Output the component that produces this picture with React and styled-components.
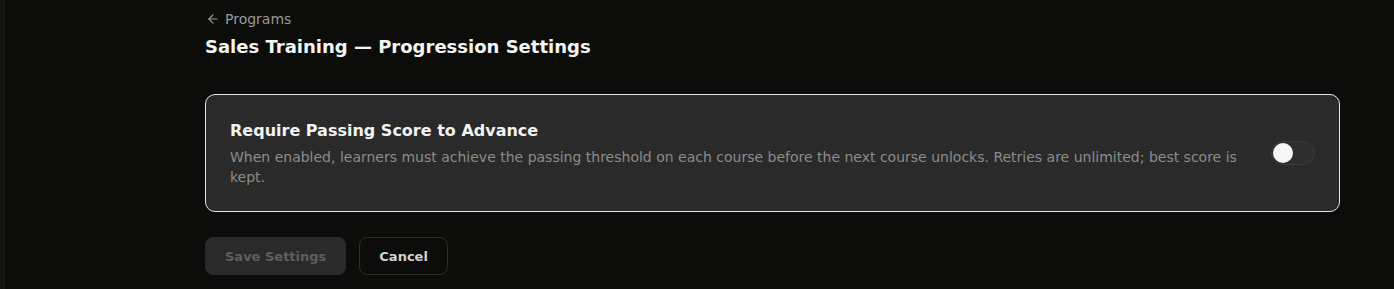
import React, { useState } from "react";
import styled, { createGlobalStyle } from "styled-components";

const Global = createGlobalStyle`
  html, body { margin: 0; padding: 0; background: #0c0c0a; }
  body { font-family: "DejaVu Sans", "Noto Sans", sans-serif; color: #f2f2f2; }
`;

const Shell = styled.div`
  display: flex;
  min-height: 289px;
  background: #0c0c0a;
`;

const Rail = styled.div`
  width: 4px;
  background: #121211;
  border-right: 1px solid #1c1c1b;
  flex-shrink: 0;
`;

const Main = styled.main`
  flex: 1;
  padding: 9px 54px 0 200px;
`;

const BackLink = styled.a`
  display: flex;
  align-items: center;
  gap: 5px;
  height: 20px;
  font-size: 14px;
  line-height: 20px;
  color: #9a9a98;
  text-decoration: none;
  cursor: pointer;
  padding-left: 1px;
`;

const Title = styled.h1`
  margin: 4px 0 33px;
  font-size: 18px;
  line-height: 28px;
  font-weight: 700;
  color: #f4f4f2;
`;

const Card = styled.section`
  display: flex;
  align-items: center;
  gap: 24px;
  padding: 24px;
  background: #2a2a2a;
  border: 1px solid #e6e6e6;
  border-radius: 10px;
`;

const CardText = styled.div`
  flex: 1;
`;

const CardTitle = styled.h2`
  margin: 1px 0 6px;
  font-size: 16px;
  line-height: 22px;
  font-weight: 700;
  color: #f2f2f2;
`;

const CardDesc = styled.p`
  margin: 0;
  font-size: 14px;
  line-height: 19.5px;
  color: #8c8c8a;
`;

const Track = styled.button`
  position: relative;
  width: 44px;
  height: 24px;
  flex-shrink: 0;
  border-radius: 12px;
  border: 1px solid #3a3a3a;
  background: ${(p) => (p.$on ? "#e6e6e6" : "#2e2e2e")};
  padding: 0;
  cursor: pointer;
`;

const Knob = styled.span`
  position: absolute;
  top: 1px;
  left: ${(p) => (p.$on ? "21px" : "1px")};
  width: 20px;
  height: 20px;
  border-radius: 50%;
  background: ${(p) => (p.$on ? "#2a2a2a" : "#f6f6f4")};
`;

const Actions = styled.div`
  display: flex;
  gap: 13px;
  margin-top: 25px;
`;

const Button = styled.button`
  height: 38px;
  padding: 0 19px;
  border-radius: 8px;
  font-family: inherit;
  font-size: 13px;
  font-weight: 700;
  cursor: pointer;
  background: ${(p) => (p.$primary ? "#2a2a2a" : "transparent")};
  color: ${(p) => (p.$primary ? "#5e5e5c" : "#d2d2d0")};
  border: 1px solid ${(p) => (p.$primary ? "#2a2a2a" : "#2e2e2c")};
`;

export default function App() {
  const [on, setOn] = useState(false);
  return (
    <>
      <Global />
      <Shell>
        <Rail />
        <Main>
          <BackLink>
            <svg width="14" height="14" viewBox="0 0 24 24" fill="none" stroke="currentColor" strokeWidth="2" strokeLinecap="round" strokeLinejoin="round">
              <path d="M19 12H5" />
              <path d="M12 19l-7-7 7-7" />
            </svg>
            Programs
          </BackLink>
          <Title>Sales Training — Progression Settings</Title>
          <Card>
            <CardText>
              <CardTitle>Require Passing Score to Advance</CardTitle>
              <CardDesc>
                When enabled, learners must achieve the passing threshold on each course before the next course unlocks. Retries are unlimited; best score is kept.
              </CardDesc>
            </CardText>
            <Track $on={on} onClick={() => setOn(!on)} aria-label="toggle">
              <Knob $on={on} />
            </Track>
          </Card>
          <Actions>
            <Button $primary disabled>Save Settings</Button>
            <Button>Cancel</Button>
          </Actions>
        </Main>
      </Shell>
    </>
  );
}
